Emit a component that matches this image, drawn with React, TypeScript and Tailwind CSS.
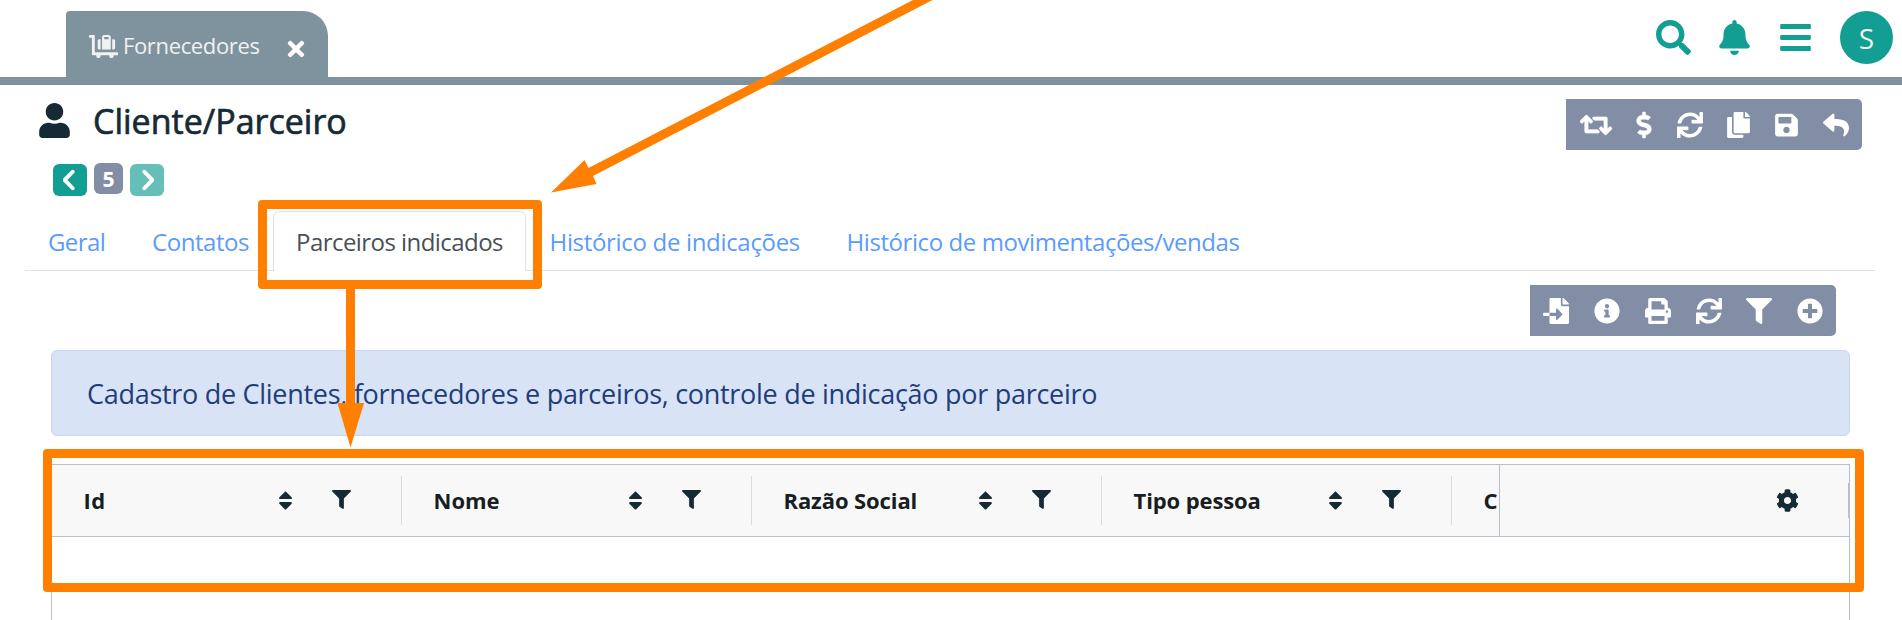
import type { ReactNode } from "react";
import {
  FaBars,
  FaBell,
  FaCog,
  FaCopy,
  FaDollarSign,
  FaFileImport,
  FaFilter,
  FaInfoCircle,
  FaLuggageCart,
  FaPlusCircle,
  FaPrint,
  FaReply,
  FaRetweet,
  FaSave,
  FaSearch,
  FaSort,
  FaSync,
  FaTimes,
  FaUser,
} from "react-icons/fa";
import { FaChevronLeft, FaChevronRight } from "react-icons/fa6";

function TopBar() {
  return (
    <header className="flex h-[85px] items-end justify-between border-b-8 border-[#7f939e]">
      <div className="ml-[66px] flex h-[66px] w-[262px] items-center rounded-tl-[4px] rounded-tr-[25px] bg-[#7f939e] pl-[23px]">
        <FaLuggageCart className="mb-[-4px] h-[29px] w-[29px] text-[#f1f1f1]" />
        <span className="ml-[5px] w-[161px] whitespace-nowrap pt-[2px] text-[22px] leading-[66px] tracking-[-0.36px] text-[#f1f1f1]">
          Fornecedores
        </span>
        <FaTimes className="mt-[10px] h-[24px] w-[24px] text-white" />
      </div>
      <div className="flex h-[77px] items-start pr-[9px] pt-[11px] text-[#139e94]">
        <FaSearch className="mt-[9px] h-[35px] w-[35px]" />
        <FaBell className="ml-[28px] mt-[9px] h-[35px] w-[31px]" />
        <FaBars className="ml-[30px] mt-[9px] h-[35px] w-[31px]" />
        <div className="ml-[29px] h-[53px] w-[53px] rounded-full bg-[#139e94] text-center text-[28px] leading-[54px] text-[#f1f1f1]">
          S
        </div>
      </div>
    </header>
  );
}

function Toolbar({ children }: { children: ReactNode }) {
  return (
    <div className="flex h-[51px] items-center rounded-r-[5px] bg-[#828ea6] text-white">{children}</div>
  );
}

function TitleRow() {
  return (
    <div className="flex h-[78px] items-start justify-between pr-[40px]">
      <div className="flex items-start pl-[39px]">
        <FaUser className="mt-[18px] h-[35px] w-[31px] text-[#152a35]" />
        <h1 className="ml-[23px] mt-[11px] text-[34px] font-medium leading-[50px] text-[#152a35] [-webkit-text-stroke:0.7px_#152a35]">
          Cliente/Parceiro
        </h1>
      </div>
      <div className="mt-[14px]">
        <Toolbar>
          <FaRetweet className="ml-[14px] h-[26px] w-[32px] overflow-visible stroke-current [stroke-width:14]" />
          <FaDollarSign className="ml-[24px] h-[26px] w-[16px] overflow-visible stroke-current [stroke-width:10]" />
          <FaSync className="ml-[25px] h-[26px] w-[26px]" />
          <FaCopy className="ml-[24px] h-[26px] w-[23px]" />
          <FaSave className="ml-[25px] h-[26px] w-[23px]" />
          <FaReply className="ml-[25px] mr-[13px] h-[26px] w-[26px]" />
        </Toolbar>
      </div>
    </div>
  );
}

function Pager() {
  return (
    <div className="flex h-[33px] items-start pl-[53px]">
      <button className="mt-px flex h-[32px] w-[34px] items-center justify-center rounded-[6px] bg-[#139e94] text-white">
        <FaChevronLeft className="h-[22px] w-[14px] stroke-current [stroke-width:26]" />
      </button>
      <span className="ml-[7px] h-[31px] w-[29px] rounded-[6px] bg-[#828ea6] text-center text-[21px] font-bold leading-[32px] text-white">
        5
      </span>
      <button className="ml-[7px] mt-px flex h-[32px] w-[34px] items-center justify-center rounded-[6px] bg-[#65bfb8] text-white">
        <FaChevronRight className="h-[22px] w-[14px] stroke-current [stroke-width:26]" />
      </button>
    </div>
  );
}

function Tabs() {
  return (
    <nav className="ml-[25px] mt-[15px] flex h-[60px] w-[1850px] whitespace-nowrap border-b border-[#dee2e6] text-[24px] leading-[61px] text-[#5a9bff]">
      <a className="w-[103px] pl-[23px] tracking-[-0.6px]">Geral</a>
      <a className="w-[145px] pl-[24px] tracking-[-0.45px]">Contatos</a>
      <a className="h-[60px] w-[253px] rounded-t-[6px] border border-b-0 border-[#dee2e6] bg-white pl-[22px] leading-[59px] tracking-[-0.55px] text-[#495057]">
        Parceiros indicados
      </a>
      <a className="w-[298px] pl-[23.5px] tracking-[-0.32px]">Histórico de indicações</a>
      <a className="pl-[22.5px] tracking-[-0.42px]">Histórico de movimentações/vendas</a>
    </nav>
  );
}

const columns = [
  { label: "Id", tracking: "tracking-[0.5px]" },
  { label: "Nome", tracking: "tracking-normal" },
  { label: "Razão Social", tracking: "tracking-[-0.1px]" },
  { label: "Tipo pessoa", tracking: "tracking-[-0.1px]" },
];

function Grid() {
  return (
    <div className="ml-[51px] mt-[28px] h-[156px] w-[1799px] border border-b-0 border-[#babfc7]">
      <div className="flex h-[72px] border-b border-[#babfc7] bg-[#f8f8f8] text-[22px] font-bold leading-[71px] text-[#181d1f]">
        <div className="flex w-[1447px] overflow-hidden">
          {columns.map((c) => (
            <div key={c.label} className="flex w-[350px] shrink-0 items-center pl-[31.5px]">
              <span className={`w-[190.5px] whitespace-nowrap ${c.tracking}`}>{c.label}</span>
              <FaSort className="h-[23px] w-[23px] text-[#152a35]" />
              <FaFilter className="ml-[35px] mt-[-2px] h-[19px] w-[19px] text-[#152a35]" />
              <span className="ml-auto h-[49px] w-px bg-[#d9dce0]" />
            </div>
          ))}
          <span className="shrink-0 pl-[31.5px]">C</span>
        </div>
        <div className="flex w-[350px] items-center justify-end border-l border-[#babfc7]">
          <FaCog className="h-[23px] w-[23px] text-[#152a35]" />
          <span className="ml-[49px] h-[35px] w-px bg-[#babfc7]" />
        </div>
      </div>
    </div>
  );
}

function Annotations() {
  return (
    <>
      <div className="absolute left-[258px] top-[200px] h-[89px] w-[284px] rounded-[4px] border-9 border-[#ff8000]" />
      <div className="absolute left-[43px] top-[449px] h-[143px] w-[1821px] rounded-[4px] border-9 border-[#ff8000]" />
      <svg className="absolute left-0 top-0" width="1902" height="620" viewBox="0 0 1902 620" fill="#ff8000">
        <polygon points="551,192.5 584.5,160 588.5,168 913,0 932.5,0 593,176 596.5,184" />
        <polygon points="346,285 355,285 355,403 364,403 350.5,447.5 337.5,403 346,403" />
      </svg>
    </>
  );
}

export default function App() {
  return (
    <div className="relative h-[620px] w-[1902px] overflow-hidden bg-white font-['Open_Sans','Noto_Sans',sans-serif]">
      <TopBar />
      <TitleRow />
      <Pager />
      <Tabs />
      <div className="mt-[14px] flex justify-end pr-[66px]">
        <Toolbar>
          <FaFileImport className="ml-[13px] h-[26px] w-[26px]" />
          <FaInfoCircle className="ml-[25px] h-[26px] w-[26px]" />
          <FaPrint className="ml-[25px] h-[26px] w-[26px]" />
          <FaSync className="ml-[25px] h-[26px] w-[26px]" />
          <FaFilter className="ml-[24px] h-[26px] w-[26px]" />
          <FaPlusCircle className="ml-[25px] mr-[13px] h-[26px] w-[26px]" />
        </Toolbar>
      </div>
      <div className="ml-[51px] mt-[14px] h-[86px] w-[1799px] whitespace-nowrap rounded-[6px] border border-[#c9d7f5] bg-[#d8e3f5] pl-[35px] text-[27px] leading-[85px] tracking-[-0.285px] text-[#1f3c7c]">
        Cadastro de Clientes, fornecedores e parceiros, controle de indicação por parceiro
      </div>
      <Grid />
      <Annotations />
    </div>
  );
}
